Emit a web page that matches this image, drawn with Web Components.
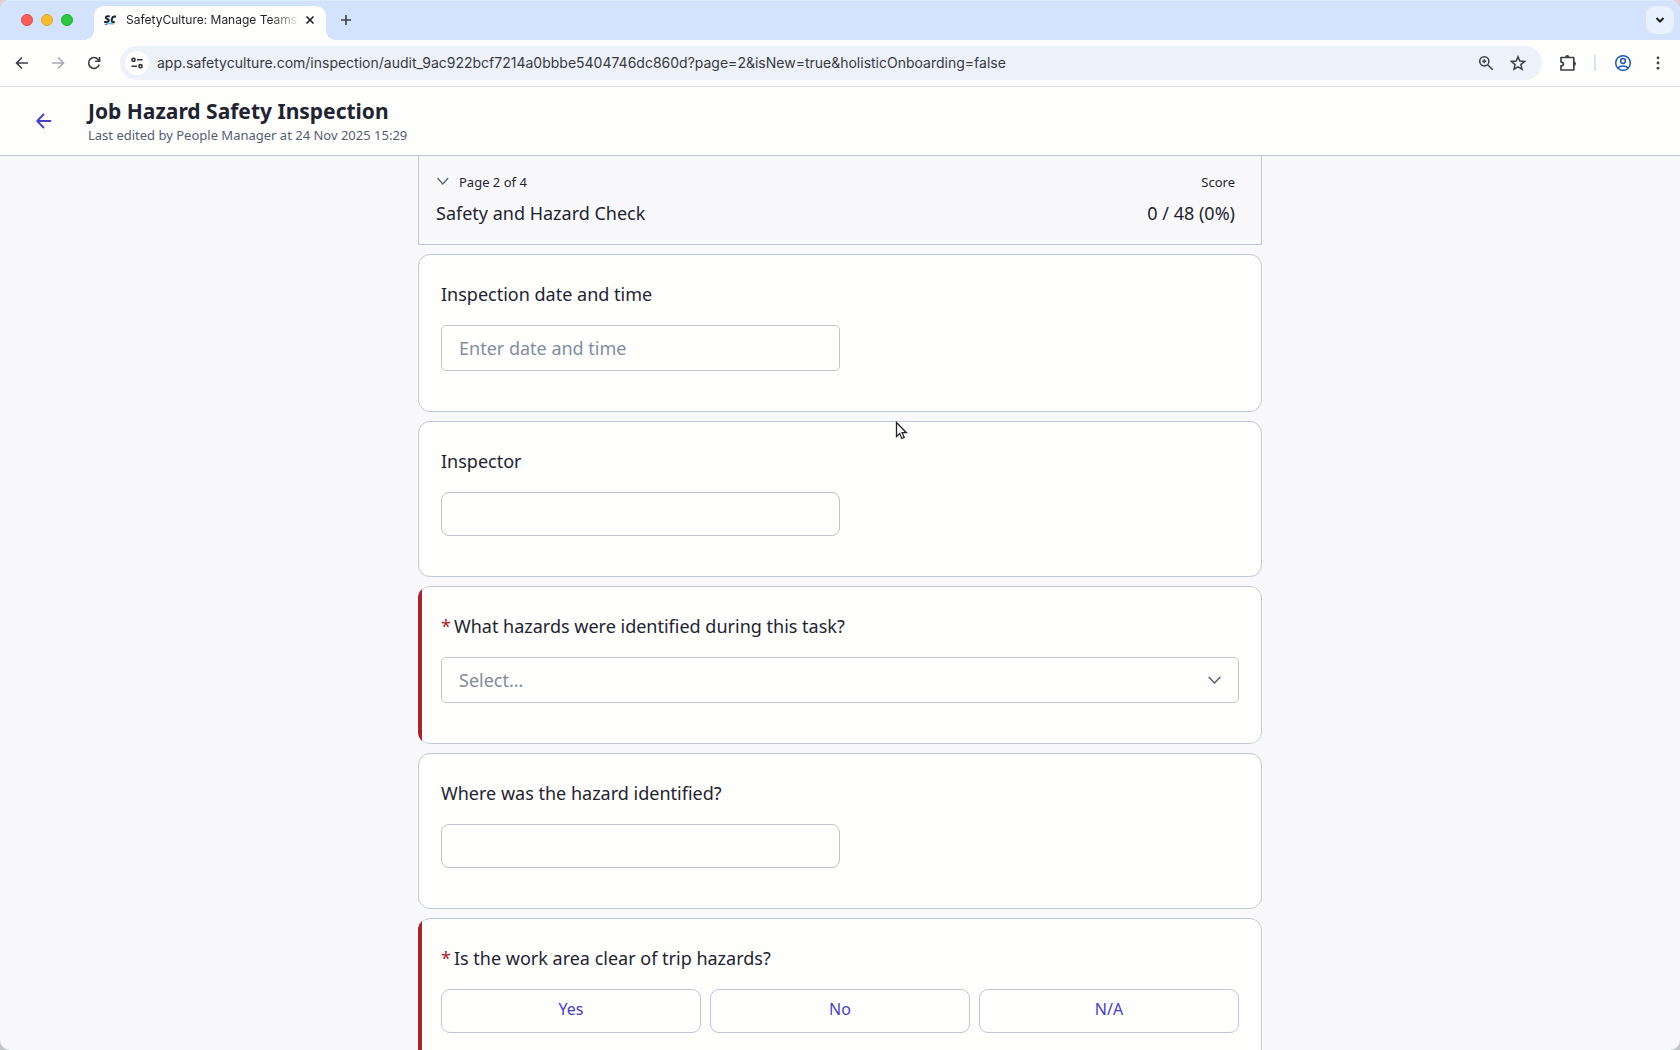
<!DOCTYPE html>
<html lang="en">
<head>
<meta charset="utf-8">
<title>SafetyCulture: Manage Teams</title>
<style>
html, body { margin: 0; height: 100%; overflow: hidden; background: linear-gradient(#e3cdd6, #c4c5c8); }
body { font-family: "Noto Sans", sans-serif; color: #1f2430; }
</style>
</head>
<body>
<browser-window>
  <tab-strip slot="chrome" tab="SafetyCulture: Manage Teams"></tab-strip>
  <address-bar slot="chrome" url="app.safetyculture.com/inspection/audit_9ac922bcf7214a0bbbe5404746dc860d?page=2&amp;isNew=true&amp;holisticOnboarding=false"></address-bar>
  <app-header heading="Job Hazard Safety Inspection">Last edited by People Manager at 24 Nov 2025 15:29</app-header>
  <inspection-page>
    <page-summary page="Page 2 of 4" heading="Safety and Hazard Check" score="0 / 48 (0%)"></page-summary>
    <date-question label="Inspection date and time" placeholder="Enter date and time"></date-question>
    <text-question label="Inspector"></text-question>
    <select-question required label="What hazards were identified during this task?" placeholder="Select..."></select-question>
    <text-question label="Where was the hazard identified?"></text-question>
    <choice-question required label="Is the work area clear of trip hazards?" choices="Yes,No,N/A"></choice-question>
  </inspection-page>
</browser-window>
<mouse-pointer></mouse-pointer>

<script>
class Base extends HTMLElement {
  connectedCallback() {
    if (this.shadowRoot) return;
    this.attachShadow({ mode: "open" }).innerHTML = `<style>
      *, *::before { box-sizing: border-box; }
      button { font: inherit; color: inherit; background: none; border: 0; padding: 0; margin: 0; cursor: pointer; }
      svg { display: block; fill: none; stroke: currentColor; }
      ${this.css()}</style>${this.html()}`;
  }
  attr(name) {
    return (this.getAttribute(name) || "").replace(/&/g, "&amp;").replace(/"/g, "&quot;").replace(/</g, "&lt;");
  }
  css() { return ""; }
  html() { return "<slot></slot>"; }
}

customElements.define("browser-window", class extends Base {
  css() { return `
    :host { display: flex; flex-direction: column; height: 100vh; box-sizing: border-box; border-radius: 10px; overflow: hidden; background: #f9f9fc; }
    .page { flex: 1; min-height: 0; overflow: hidden; display: flex; flex-direction: column; }`; }
  html() { return `<slot name="chrome"></slot><div class="page"><slot></slot></div>`; }
});

customElements.define("tab-strip", class extends Base {
  css() { return `
    :host { display: flex; align-items: flex-end; justify-content: space-between; height: 40px; box-sizing: border-box; padding: 0 6px 0 21px; background: #d3e3fd; border-top: 1px solid #d8eefa; font: 12px/16px Inter, sans-serif; color: #1f2023; }
    .left, .lights { display: flex; align-items: center; }
    .lights { gap: 8px; margin-right: 21px; }
    .lights button { width: 12px; height: 12px; border-radius: 50%; }
    .r { background: #f95e57; border: 1px solid #dd4a42; } .y { background: #f9bc2f; border: 1px solid #dda32a; } .g { background: #2bc840; border: 1px solid #24a934; }
    .left { align-self: flex-end; height: 34px; }
    .tab { position: relative; display: flex; align-items: center; width: 232px; height: 34px; padding: 0 8px 7px 9px; border-radius: 10px 10px 0 0; background: #fefefd; }
    .tab::before, .tab::after { content: ""; position: absolute; bottom: 0; width: 10px; height: 10px; }
    .tab::before { right: 100%; background: radial-gradient(circle at 0 0, transparent 10px, #fefefd 10px); }
    .tab::after { left: 100%; background: radial-gradient(circle at 100% 0, transparent 10px, #fefefd 10px); }
    .name { flex: 1; margin-left: 9px; overflow: hidden; white-space: nowrap; -webkit-mask: linear-gradient(90deg, #000 145px, transparent 174px); mask: linear-gradient(90deg, #000 145px, transparent 174px); }
    .close, .new, .more { display: grid; place-items: center; }
    .close { width: 16px; height: 16px; }
    .lights, .new { padding-bottom: 7px; }
    .new { width: 20px; height: 34px; margin-left: 10px; color: #3d4045; }
    .more { width: 28px; height: 28px; margin-bottom: 6px; border-radius: 9px; background: #e9f1fe; }`; }
  html() { return `
    <div class="left">
      <div class="lights"><button class="r" aria-label="Close window"></button><button class="y" aria-label="Minimise window"></button><button class="g" aria-label="Zoom window"></button></div>
      <div class="tab">
        <svg width="14" height="12" viewBox="0 0 14 12"><path d="M1 10l4-.5 2-1 6-.5-3 2.500z" fill="#47c4ee" stroke="none"/><path d="M1 10.500l4-1.200-1 2z" fill="#7a55e0" stroke="none"/><path d="M8 10.500l4-2.500-1 2.500z" fill="#f4c445" stroke="none"/><path d="M6.700 2.300H4.500C2.500 2.300 2.300 4.500 4 4.900l.8.300C6.500 5.700 5.800 8 4 8H1.200M13 2.500h-1.500C8.800 2.500 7.500 7.900 10 7.900h1.600" stroke="#1d2433" stroke-width="2"/></svg>
        <span class="name">${this.attr("tab")}</span>
        <button class="close" aria-label="Close tab"><svg width="10" height="10" viewBox="0 0 10 10" stroke-width="1.600"><path d="M1.500 1.500l7 7m0-7l-7 7"/></svg></button>
      </div>
      <button class="new" aria-label="New tab"><svg width="12" height="12" viewBox="0 0 12 12" stroke-width="1.600"><path d="M6 1v10M1 6h10"/></svg></button>
    </div>
    <button class="more" aria-label="Search tabs"><svg width="10" height="8" viewBox="0 0 10 8" stroke-width="2"><path d="M1.500 2l3.500 3.500L8.500 2"/></svg></button>`; }
});

customElements.define("address-bar", class extends Base {
  css() { return `
    :host { display: flex; align-items: center; height: 47px; box-sizing: border-box; padding: 0 14px; background: #fefefd; border-bottom: 1px solid #dfe1e8; color: #3d4045; }
    button { display: grid; place-items: center; flex: none; }
    .nav { display: flex; gap: 20px; margin-right: 18px; }
    .nav button { width: 16px; height: 16px; }
    .off { color: #a9abaf; }
    .box { flex: 1; min-width: 0; display: flex; align-items: center; height: 34px; padding: 0 16px 0 5px; border-radius: 17px; background: #edf1fa; }
    .site { width: 24px; height: 24px; border-radius: 50%; background: #fefefd; color: #303237; }
    input { flex: 1; min-width: 0; margin: 0 8px; padding: 0; border: 0; outline: 0; background: none; font: 14px/20px Inter, sans-serif; color: #36393e; }
    .in { display: flex; gap: 16px; }
    .out { display: flex; align-items: center; gap: 18px; margin-left: 18px; }
    .sep { width: 2px; height: 16px; background: #d3e3fd; }
    .who { color: #1d55b8; }`; }
  html() { return `
    <div class="nav">
      <button aria-label="Back"><svg width="14" height="14" viewBox="0 0 14 14" stroke-width="1.600"><path d="M13 7H2M7 1.500L1.500 7 7 12.500"/></svg></button>
      <button class="off" aria-label="Forward"><svg width="14" height="14" viewBox="0 0 14 14" stroke-width="1.600"><path d="M1 7h11M7 1.500L12.500 7 7 12.500"/></svg></button>
      <button aria-label="Reload"><svg width="14" height="14" viewBox="0 0 14 14" stroke-width="1.600"><path d="M12.200 8.500A5.400 5.400 0 1 1 11.200 3.500L12.500 5M12.600 1v4.300H8.300"/></svg></button>
    </div>
    <div class="box">
      <button class="site" aria-label="Site information"><svg width="14" height="12" viewBox="0 0 14 12" stroke-width="1.600"><circle cx="3.500" cy="2.800" r="1.600"/><path d="M7 2.800h5.500M1.500 9.200H7"/><circle cx="10.500" cy="9.200" r="1.600"/></svg></button>
      <input type="text" aria-label="Address" value="${this.attr("url")}">
      <div class="in">
        <button aria-label="Zoom"><svg width="16" height="16" viewBox="0 0 16 16" stroke-width="1.500"><circle cx="6.300" cy="6.300" r="4.600"/><path d="M9.700 9.700l5 5M6.300 4.300v4M4.300 6.300h4"/></svg></button>
        <button aria-label="Bookmark"><svg width="16" height="16" viewBox="0 0 16 16" stroke-width="1.500"><path d="M8 1.800l1.800 4.300 4.700.4-3.600 3.100 1.100 4.600L8 11.800l-4 2.400 1.100-4.600L1.500 6.500l4.700-.4z"/></svg></button>
      </div>
    </div>
    <div class="out">
      <button aria-label="Extensions"><svg width="16" height="18" viewBox="1 0 16 18" stroke-width="1.700"><path d="M2 3.500h12.800v12.500H2v-4.100c3.200-.2 3.200-3.600 0-3.800z" stroke-linejoin="round"/><path d="M6.200 3.200a2.100 2.100 0 0 1 4.200 0zM15 7.800a2 2 0 0 1 0 4z" fill="currentColor" stroke="none"/></svg></button>
      <span class="sep"></span>
      <button class="who" aria-label="Profile"><svg width="18" height="18" viewBox="0 0 18 18" stroke-width="1.500"><circle cx="9" cy="9" r="7.300"/><circle cx="9" cy="7" r="2.400"/><path d="M3.800 14c3-2.800 7.400-2.800 10.400 0"/></svg></button>
      <button aria-label="Menu"><svg width="16" height="16" viewBox="0 0 16 16"><g fill="currentColor" stroke="none"><circle cx="8" cy="2.800" r="1.400"/><circle cx="8" cy="8" r="1.400"/><circle cx="8" cy="13.200" r="1.400"/></g></svg></button>
    </div>`; }
});

customElements.define("app-header", class extends Base {
  css() { return `
    :host { display: flex; align-items: center; gap: 36px; flex: none; box-sizing: border-box; height: 69px; padding: 0 36px; background: #fefefd; border-bottom: 1px solid #bfc6d0; }
    a { color: #4740c4; }
    h1 { margin: 0; font-size: 21px; line-height: 28px; font-weight: 700; }
    p { margin: 0; font-size: 13px; line-height: 20px; color: #545f70; }`; }
  html() { return `
    <a href="#" aria-label="Back to inspections"><svg width="16" height="16" viewBox="0 0 16 16" stroke-width="1.800" stroke-linecap="round" stroke-linejoin="round"><path d="M14.500 8H1.500M7.500 1.500L1.200 8l6.300 6.500"/></svg></a>
    <div><h1>${this.attr("heading")}</h1><p><slot></slot></p></div>`; }
});

customElements.define("inspection-page", class extends Base {
  css() { return `
    :host { display: flex; flex-direction: column; flex: none; gap: 9px; box-sizing: border-box; width: 100%; max-width: 844px; margin: 0 auto; }`; }
});

customElements.define("page-summary", class extends Base {
  css() { return `
    :host { display: flex; justify-content: space-between; box-sizing: border-box; padding: 16px 26px 17px 17px; border: 1px solid #bfc6d0; border-top: 0; }
    div { display: flex; flex-direction: column; gap: 7px; }
    .score { text-align: right; }
    button { display: flex; align-items: center; gap: 9px; }
    button svg { color: #545f70; }
    button, small { font-size: 13px; line-height: 20px; }
    h2, b { margin: 0; font-size: 18px; line-height: 28px; font-weight: 400; }`; }
  html() { return `
    <div><button><svg width="14" height="12" viewBox="0 0 14 12" stroke-width="1.200"><path d="M1.500 2l5.300 6 5.300-6"/></svg>${this.attr("page")}</button><h2>${this.attr("heading")}</h2></div>
    <div class="score"><small>Score</small><b>${this.attr("score")}</b></div>`; }
});

class Question extends Base {
  css() { return `
    :host { display: block; position: relative; box-sizing: border-box; padding: 25px 22px 40px; border: 1px solid #bfc6d4; border-radius: 12px; background: #fefefd; }
    :host([required]) { clip-path: inset(0 round 12px); }
    :host([required])::before { content: ""; position: absolute; top: -1px; bottom: -1px; left: -1px; width: 4px; background: #a8242d; }
    .label { display: block; margin-bottom: 17px; font-size: 18px; line-height: 28px; }
    i { font-style: normal; color: #a8242d; margin-right: 3px; }
    .field { display: block; width: 50%; height: 44px; margin: 0; padding: 0 17px; border: 1px solid #bfc3cc; border-radius: 8px; background: #fefefd; outline: 0; font: inherit; font-size: 18px; color: #1f2430; }
    .tall { height: 46px; border-radius: 5px; }
    .field::placeholder { color: #828ea0; opacity: 1; }
    ${this.extra()}`; }
  extra() { return ""; }
  star() { return this.hasAttribute("required") ? `<i>*</i>` : ""; }
  html() { return `<label class="label" for="answer">${this.star()}${this.attr("label")}</label>${this.control()}`; }
}

customElements.define("text-question", class extends Question {
  control() { return `<input id="answer" class="field" type="text">`; }
});
customElements.define("date-question", class extends Question {
  control() { return `<input id="answer" class="field tall" type="text" placeholder="${this.attr("placeholder")}">`; }
});
customElements.define("select-question", class extends Question {
  extra() { return `
    .wrap { display: grid; align-items: center; }
    .wrap > * { grid-area: 1 / 1; }
    select.field { width: 100%; appearance: none; color: #828b98; }
    svg { justify-self: end; margin-right: 18px; color: #545f70; pointer-events: none; }`; }
  control() { return `<div class="wrap"><select id="answer" class="field tall"><option>${this.attr("placeholder")}</option></select><svg width="13" height="10" viewBox="0 0 13 10" stroke-width="1.500"><path d="M.7 2l5.800 6 5.800-6"/></svg></div>`; }
});
customElements.define("choice-question", class extends Question {
  extra() { return `
    .row { display: grid; grid-template-columns: repeat(3, 1fr); gap: 9px; }
    .row button { height: 44px; padding-bottom: 4px; border: 1px solid #bfc6d4; border-radius: 9px; font-size: 16px; color: #4740c4; }`; }
  html() { return `<div class="label" id="q">${this.star()}${this.attr("label")}</div>
    <div class="row" role="group" aria-labelledby="q">${this.attr("choices").split(",").map(c => `<button>${c}</button>`).join("")}</div>`; }
});

customElements.define("mouse-pointer", class extends Base {
  css() { return `:host { position: absolute; left: 895px; top: 421px; pointer-events: none; }`; }
  html() { return `<svg width="14" height="20" viewBox="0 0 14 20"><path d="M1.500 1.500v14l3.200-3 2.100 5 2.400-1-2.100-4.800h4.300z" fill="#fff" stroke="#22222c" stroke-width="1.300"/></svg>`; }
});
</script>
</body>
</html>
